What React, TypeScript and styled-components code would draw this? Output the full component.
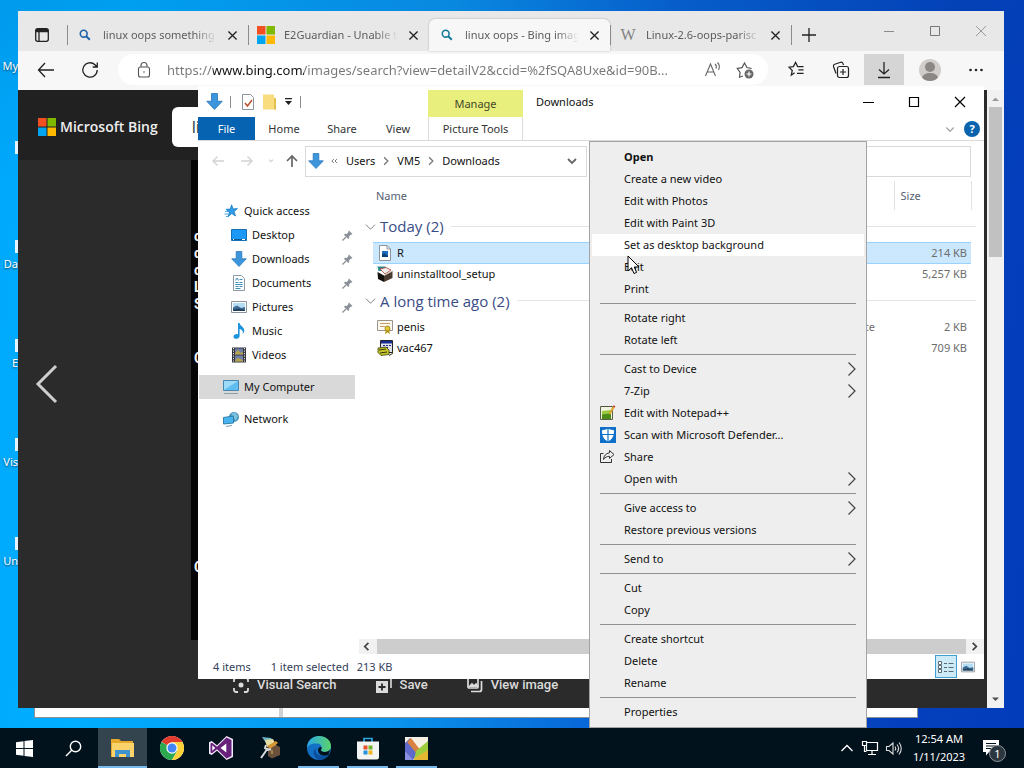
import { ReactNode } from "react";
import styled, { createGlobalStyle, css } from "styled-components";

const GlobalStyle = createGlobalStyle`
  *, *::before, *::after {
    box-sizing: border-box;
  }
  body {
    margin: 0;
    font-family: "Noto Sans", "Open Sans", sans-serif;
    font-size: 11px;
    line-height: 16px;
    color: #111;
    overflow: hidden;
  }
  button, input {
    font: inherit;
    color: inherit;
    border: none;
    padding: 0;
    background: none;
  }
  svg {
    display: block;
    flex-shrink: 0;
  }
`;

/* ---------- icons ---------- */

interface LineProps {
  d: string;
  size?: number;
  box?: number;
  color?: string;
  stroke?: number;
}

function Line({ d, size = 16, box = 16, color = "#222", stroke = 1 }: LineProps) {
  return (
    <svg
      width={size}
      height={size}
      viewBox={`0 0 ${box} ${box}`}
      fill="none"
      stroke={color}
      strokeWidth={stroke}
      aria-hidden="true"
    >
      <path d={d} />
    </svg>
  );
}

const CLOSE = "M3 3l10 10M13 3L3 13";
const CHEVRON_DOWN = "M3 6l5 5 5-5";
const CHEVRON_RIGHT = "M5 2l6 6-6 6";

function MicrosoftLogo({ size = 18 }: { size?: number }) {
  return (
    <svg width={size} height={size} viewBox="0 0 18 18" aria-hidden="true">
      <path fill="#f25022" d="M0 0h8.5v8.5H0z" />
      <path fill="#7fba00" d="M9.5 0H18v8.5H9.5z" />
      <path fill="#00a4ef" d="M0 9.5h8.5V18H0z" />
      <path fill="#ffb900" d="M9.5 9.5H18V18H9.5z" />
    </svg>
  );
}

function SearchIcon({ color }: { color: string }) {
  return (
    <svg width="18" height="18" viewBox="0 0 18 18" fill="none" stroke={color} strokeWidth="1.6" aria-hidden="true">
      <circle cx="7.7" cy="7.7" r="3.4" />
      <path d="M10.2 10.2l3.6 3.6" strokeWidth="2" />
    </svg>
  );
}

function DownArrow({ size = 16 }: { size?: number }) {
  return (
    <svg width={size} height={size} viewBox="0 0 16 16" aria-hidden="true">
      <path d="M5.2.5h5.6v7.3h4.5L8 15.5.7 7.8h4.5z" fill="#3d95dc" stroke="#2a78bd" strokeWidth="0.8" />
    </svg>
  );
}

function StarIcon() {
  return (
    <svg width="16" height="16" viewBox="0 0 16 16" aria-hidden="true">
      <path d="M8.6 1.8l1.5 4.1 4.4-.3-3.4 2.9 1.4 4.5-3.7-2.4-3.5 2.9 1-4.5L3 6.3l4.3-.2z" fill="#2d9be8" stroke="#1b7cc4" strokeWidth="0.8" />
      <path d="M2 8.5h3M1.500 11h3.600M3 13.500h2.600" stroke="#4aa8e8" />
    </svg>
  );
}

function DesktopIcon() {
  return (
    <svg width="16" height="16" viewBox="0 0 16 16" aria-hidden="true">
      <path d="M.5 2.5h15v11H.5z" fill="#1b98f5" stroke="#1672b8" />
      <path d="M1 12.5h14" stroke="#0c5a96" />
      <path d="M2 12.5h1m8 0h3" stroke="#fff" />
    </svg>
  );
}

function DocumentIcon() {
  return (
    <svg width="16" height="16" viewBox="0 0 16 16" fill="none" aria-hidden="true">
      <path d="M2.5.5h8l3 3v12h-11z" fill="#fff" stroke="#8a9aa5" />
      <path d="M4.500 5.500l1.500-2.500 1.500 2.500M8.500 4.500h3M4.500 7.500h3m1 0h3M4.500 9.500h7M4.500 11.500h3m1 0h3M4.500 13.500h5" stroke="#3b8fb8" />
    </svg>
  );
}

function PictureIcon({ size = 16 }: { size?: number }) {
  return (
    <svg width={size} height={size} viewBox="0 0 16 16" aria-hidden="true">
      <path d="M.5 2.500h15v11H.5z" fill="#fff" stroke="#8b939b" />
      <path d="M2 4h12v8H2z" fill="#b5dcf5" />
      <path d="M2 8.500l4-2 4 2.500 4-1V12H2z" fill="#3d6c94" />
      <path d="M2 10.500l6-1 6 1.500v1H2z" fill="#24435f" />
    </svg>
  );
}

function MusicIcon() {
  return (
    <svg width="16" height="16" viewBox="0 0 16 16" fill="#1d93dc" aria-hidden="true">
      <path d="M7 0h1.600c.3 3 4.900 4 4.700 7.500-.1 1.700-.8 2.700-1.600 3.400.8-3-.8-4.300-3.100-5v7c0 1.600-1.700 2.900-3.500 2.900-1.600 0-2.600-.9-2.600-2.100C2.500 12 4.200 11 5.800 11c.5 0 .9.1 1.200.2z" />
    </svg>
  );
}

function VideoIcon() {
  return (
    <svg width="16" height="16" viewBox="0 0 16 16" aria-hidden="true">
      <path d="M1 .5h14v15H1z" fill="#33363c" />
      <path d="M4 1.500h8v6H4zM4 8.500h8v6H4z" fill="#6f7fa8" />
      <path d="M4 6l3-3 3 3 2-1v2.500H4zM4 13l3-2 5 2v1.500H4z" fill="#b6a34e" />
      <path d="M2.500 1v14M13.500 1v14" stroke="#e6e8ea" strokeDasharray="1.200 1.300" />
    </svg>
  );
}

function ComputerIcon() {
  return (
    <svg width="16" height="16" viewBox="0 0 16 16" aria-hidden="true">
      <path d="M.5 1.500h15v10H.5z" fill="#5fbdf0" stroke="#4a86ae" />
      <path d="M1 2h14L1 11z" fill="#9ddaf8" />
      <path d="M1 14.500h14" stroke="#8ba0ad" />
    </svg>
  );
}

function NetworkIcon() {
  return (
    <svg width="16" height="16" viewBox="0 0 16 16" aria-hidden="true">
      <circle cx="11" cy="6" r="5" fill="#4690b8" />
      <path d="M8 3l4-2 3 4-2 5z" fill="#7cc1dd" />
      <path d="M.5 6.500l10-1.500v7l-10 1z" fill="#48b4ee" stroke="#337da8" />
      <path d="M3 15.500l6-1" stroke="#6fa0bd" />
    </svg>
  );
}

function PinIcon() {
  return (
    <svg width="11" height="11" viewBox="0 0 11 11" aria-hidden="true">
      <path d="M7 .5L10.500 4l-1 .7-.6-.2-1.800 2 .1 1.800-.9.8L1.900 4.700l.9-.9 1.800.1 2-1.800-.3-.7z" fill="#8b9299" />
      <path d="M4 7L.5 10.500" stroke="#8b9299" strokeWidth="1.300" />
    </svg>
  );
}

function ImageFileIcon() {
  return (
    <svg width="16" height="16" viewBox="0 0 16 16" aria-hidden="true">
      <path d="M2.500.5h7.500l3.500 3.500v11.500h-11z" fill="#fff" stroke="#8d959c" />
      <path d="M10 .5V4h3.500" fill="none" stroke="#8d959c" />
      <path d="M5 6h6v6H5z" fill="#1c6fc0" />
      <path d="M5 10l2-2 4 3v1H5z" fill="#0b3e74" />
    </svg>
  );
}

function BoxIcon() {
  return (
    <svg width="16" height="16" viewBox="0 0 16 16" aria-hidden="true">
      <path d="M.5.500h8l1 4.500H1.500z" fill="#2b8a8d" />
      <path d="M3 3l6-1.500 5 2.500-6 4z" fill="#eee" stroke="#b4402b" strokeWidth="0.800" />
      <path d="M.5 6l6.500 3.500v6.500l-6-3z" fill="#15110f" />
      <path d="M7 9.500l8.500-4.500v7l-8.500 4z" fill="#493b30" />
      <path d="M7 9.500l8.500-4.500" stroke="#c9c0b8" />
    </svg>
  );
}

function CertificateIcon() {
  return (
    <svg width="16" height="16" viewBox="0 0 16 16" aria-hidden="true">
      <path d="M.5 1.500h15v10H.5z" fill="#fdf9ef" stroke="#99938a" />
      <path d="M3 4.500h10M3 7.500h5" stroke="#c49d73" />
      <path d="M9 10l-1 5 2.500-1.500L13 15l-1-5z" fill="#b99c1a" />
      <circle cx="10.500" cy="9.500" r="2.500" fill="#e3c831" stroke="#917a10" strokeWidth="0.800" />
    </svg>
  );
}

function InstallerIcon() {
  return (
    <svg width="16" height="16" viewBox="0 0 16 16" aria-hidden="true">
      <path d="M3.500.5h12v12h-12z" fill="#dfe2ec" stroke="#22242c" />
      <path d="M4 1h11v2.500H4z" fill="#1a2c8c" />
      <path d="M6 5.500h2m1 0h2m1 0h2M6 7.500h2m1 0h2" stroke="#1a2c8c" />
      <path d="M1 8l8-1 3 3v4.500l-8 1-3-3z" fill="#c7c62c" stroke="#3f410b" strokeWidth="0.800" />
      <path d="M2 10l7-1M3 13l7-1M12 15.500l3.500-2V11" stroke="#33350a" fill="none" />
    </svg>
  );
}

function NotepadIcon() {
  return (
    <svg width="16" height="16" viewBox="0 0 16 16" aria-hidden="true">
      <path d="M.5 1.500h12v13H.5z" fill="#eef4dd" stroke="#5b6147" />
      <path d="M2 6l9-1v9H2z" fill="#9ac83e" />
      <path d="M2 9.500l9-1V14H2z" fill="#4b8b17" />
      <path d="M1 1.500h11" stroke="#444" strokeDasharray="1 1" />
      <path d="M14 1.500L9.500 9" stroke="#e0a32d" strokeWidth="2" />
      <path d="M13.300.8l1.800 1" stroke="#c33b2c" strokeWidth="1.500" />
    </svg>
  );
}

function DefenderIcon() {
  return (
    <svg width="16" height="16" viewBox="0 0 16 16" aria-hidden="true">
      <path d="M0 0h16v16H0z" fill="#0f70c9" />
      <path d="M8 1.500c2 1.300 4 1.700 6 1.700 0 5.300-1.200 9-6 11.300-4.800-2.300-6-6-6-11.300 2 0 4-.4 6-1.700z" fill="#fff" />
      <path d="M8 1v14M1.500 7.500h13" stroke="#0f70c9" strokeWidth="1.200" />
    </svg>
  );
}

function ShareIcon() {
  return (
    <svg width="16" height="16" viewBox="0 0 16 16" fill="none" stroke="#333" aria-hidden="true">
      <path d="M3.500 4.500h-3v9h11V10" />
      <path d="M9.500 1.500L14 5.500 9.500 9.500V7.300C7 7.300 5 8.200 3.500 10.500c.3-3.700 2.300-6.200 6-6.700z" />
    </svg>
  );
}

/* ---------- desktop ---------- */

const Screen = styled.div`
  height: 100vh;
  display: flex;
  flex-direction: column;
`;

const Desktop = styled.main`
  position: relative;
  flex: 1;
  min-height: 0;
  background: linear-gradient(180deg, rgba(0, 70, 150, 0.15), transparent 25%),
    linear-gradient(95deg, #00a8fb 0%, #00aeff 12%, #0a93ec 42%, #0862d4 62%, #0440bd 88%, #033cba 100%);
`;

const Shortcuts = styled.div`
  position: absolute;
  top: -25px;
  left: 0;
  width: 18px;
  overflow: hidden;
  color: #fff;
`;

const Shortcut = styled.div<{ $shard: boolean }>`
  height: 99px;
  display: flex;
  flex-direction: column;
  justify-content: flex-end;
  align-items: flex-end;
  gap: 3px;

  &::before {
    content: "";
    width: 3px;
    height: 13px;
    background: ${(p) => (p.$shard ? "#e4f3fd" : "transparent")};
  }

  span {
    min-height: 16px;
    text-shadow: 0 1px 2px rgba(0, 0, 0, 0.6);
  }
`;

const BackWindow = styled.div`
  position: absolute;
  left: 34px;
  right: 106px;
  bottom: 10px;
  height: 40px;
  display: flex;
  background: #fff;
  border: 1px solid #8a9298;

  &::before {
    content: "";
    width: 248px;
    border-right: 4px solid #d0d3d6;
  }
`;

/* ---------- browser ---------- */

const Browser = styled.section`
  position: absolute;
  inset: 11px 20px 20px 18px;
  display: flex;
  flex-direction: column;
  background: #2b2b2b;
`;

const TabStrip = styled.div`
  height: 40px;
  display: flex;
  align-items: stretch;
  background: #e8e8e8;
`;

const TabMenu = styled.button`
  width: 49px;
  padding-left: 16px;
  padding-top: 8px;
`;

const Tab = styled.div<{ $active?: boolean }>`
  position: relative;
  width: 181px;
  margin-top: 8px;
  padding: 0 9px;
  display: flex;
  align-items: center;
  gap: 9px;
  color: #5c5c5c;
  border-radius: 6px 6px 0 0;
  ${(p) =>
    p.$active &&
    css`
      background: #f7f7f7;
      box-shadow: 0 0 2px rgba(0, 0, 0, 0.3);
    `}

  &::before {
    content: "";
    position: absolute;
    left: 0;
    height: 20px;
    border-left: 1px solid ${(p) => (p.$active ? "transparent" : "#8b8b8b")};
  }

  ${(p) => p.$active && "& + &::before { border-color: transparent; }"}
`;

const TabTitle = styled.span`
  flex: 1;
  min-width: 0;
  overflow: hidden;
  white-space: nowrap;
  mask-image: linear-gradient(90deg, #000 80%, transparent);
`;

const Wiki = styled.span`
  width: 18px;
  text-align: center;
  font-family: "Liberation Serif", serif;
  font-size: 16px;
  color: #808080;
`;

const NewTab = styled.button`
  position: relative;
  width: 36px;
  margin-top: 8px;
  padding-left: 10px;

  &::before {
    content: "";
    position: absolute;
    left: 0;
    top: 6px;
    height: 20px;
    border-left: 1px solid #8b8b8b;
  }
`;

const WindowButtons = styled.div`
  margin-left: auto;
  display: flex;
  align-items: center;
  gap: 30px;
  padding-right: 15px;

  button {
    width: 16px;
    height: 16px;
  }
`;

const Toolbar = styled.div`
  height: 39px;
  display: flex;
  align-items: center;
  background: #f7f7f7;
  padding: 0 20px 2px 19px;
`;

const ToolButton = styled.button<{ $w: number; $on?: boolean }>`
  width: ${(p) => p.$w}px;
  height: 31px;
  display: flex;
  align-items: center;
  justify-content: ${(p) => (p.$on ? "center" : "flex-start")};
  background: ${(p) => (p.$on ? "#d5d5d5" : "none")};
`;

const ProfileButton = styled(ToolButton)`
  padding-left: 15px;
`;

const AddressBar = styled.div`
  flex: 1;
  min-width: 0;
  height: 31px;
  display: flex;
  align-items: center;
  gap: 14px;
  margin-right: 20px;
  padding: 0 14px 0 17px;
  border-radius: 16px;
  background: #fff;
`;

const AddressInput = styled.input`
  flex: 1;
  min-width: 0;
  font-size: 13px;
  color: transparent;
  background: linear-gradient(90deg, #777 0 46px, #111 46px 137px, #777 137px);
  -webkit-background-clip: text;
  background-clip: text;
`;

const Avatar = styled.span`
  width: 22px;
  height: 22px;
  border-radius: 50%;
  overflow: hidden;
`;

const PageArea = styled.div`
  flex: 1;
  min-height: 0;
  display: flex;
`;

const Page = styled.div`
  flex: 1;
  min-width: 0;
  display: flex;
  flex-direction: column;
`;

const BingHeader = styled.header`
  height: 70px;
  display: flex;
  align-items: center;
  gap: 14px;
  padding: 4px 0 0 20px;
  background: #212121;
`;

const BingLogo = styled.a`
  display: flex;
  align-items: center;
  gap: 4px;
  color: #eee;
  font: 600 14px/20px "Open Sans", sans-serif;
  text-decoration: none;
`;

const BingSearch = styled.input`
  flex: 1;
  height: 40px;
  padding-left: 20px;
  border-radius: 6px;
  background: #fff;
  color: #2a4a4a;
  font-size: 16px;
`;

const Viewer = styled.div`
  flex: 1;
  min-height: 0;
  display: flex;
`;

const PrevButton = styled.button`
  width: 173px;
  padding: 0 0 32px 7px;
`;

const Photo = styled.div`
  flex: 1;
  padding: 68px 0 0 3px;
  background: #050505;
  color: #f2f2f2;
  font: bold 14px/17px Roboto, sans-serif;
`;

const PhotoLine = styled.div<{ $gap?: number }>`
  margin-top: ${(p) => p.$gap || 0}px;
`;

const ViewerActions = styled.footer`
  height: 68px;
  display: flex;
  gap: 39px;
  padding: 35px 0 0 215px;

  button {
    display: flex;
    gap: 8px;
    height: 20px;
    align-items: center;
    color: #dcdcdc;
    font: 500 13px/20px Roboto, sans-serif;
  }
`;

const PageScroll = styled.div`
  width: 17px;
  margin-left: 3px;
  display: flex;
  flex-direction: column;
  align-items: center;
  background: #f1f1f1;

  div {
    width: 13px;
    height: 150px;
    margin: 0 2px auto;
    background: #c1c1c1;
  }
`;

/* ---------- file explorer ---------- */

const Explorer = styled.section`
  position: absolute;
  inset: 86px 40px 49px 198px;
  display: flex;
  flex-direction: column;
  background: #fff;
`;

const TitleRow = styled.div`
  height: 31px;
  display: flex;
  align-items: center;
`;

const ExplorerButtons = styled(WindowButtons)`
  padding-right: 16px;
`;

const QuickTools = styled.div`
  width: 230px;
  padding-left: 8px;
  display: flex;
  align-items: center;
  gap: 7px;
`;

const Divider = styled.span`
  height: 12px;
  border-left: 1px solid #8c8c8c;

  & + svg {
    margin-left: 3px;
  }
`;

const ManageTab = styled.div`
  width: 95px;
  align-self: stretch;
  margin: 4px 13px 0 0;
  background: #e9ef7d;
  color: #44482a;
  line-height: 28px;
  text-align: center;
`;

const Ribbon = styled.div`
  height: 24px;
  display: flex;
  align-items: stretch;
  padding-right: 4px;
  border-bottom: 1px solid #d9dadb;
`;

const RibbonTabs = styled.div`
  width: 230px;
  display: flex;
`;

const RibbonTab = styled.button<{ $w: number; $file?: boolean; $tools?: boolean }>`
  width: ${(p) => p.$w}px;
  background: ${(p) => (p.$file ? "#0563b1" : "none")};
  color: ${(p) => (p.$file ? "#fff" : "#333")};
  border: solid #dcdcdc;
  border-width: ${(p) => (p.$tools ? "0 1px" : "0")};
`;

const ExpandRibbon = styled.button`
  margin-left: auto;
`;

const Help = styled.button`
  width: 16px;
  height: 16px;
  margin-left: 8px;
  align-self: center;
  border-radius: 50%;
  background: #0a64ad;
  color: #fff;
  font-weight: bold;
  line-height: 16px;
`;

const NavRow = styled.div`
  height: 40px;
  display: flex;
  align-items: center;
  padding: 0 13px 0 12px;
`;

const NavButton = styled.button<{ $w: number }>`
  width: ${(p) => p.$w}px;
`;

const PathBox = styled.div`
  width: 282px;
  height: 31px;
  display: flex;
  align-items: center;
  gap: 6px;
  padding: 0 6px 0 2px;
  border: 1px solid #d9d9d9;

  button:last-child {
    margin-left: auto;
  }
`;

const SearchBox = styled.input`
  flex: 1;
  min-width: 0;
  height: 31px;
  margin-left: 6px;
  border: 1px solid #d9d9d9;
`;

const Content = styled.div`
  flex: 1;
  min-height: 0;
  display: flex;
`;

const Sidebar = styled.nav`
  width: 161px;
  padding: 18px 4px 0 1px;
`;

const SideItem = styled.button<{ $level?: number; $gap?: boolean; $on?: boolean }>`
  width: 100%;
  height: 24px;
  margin-top: ${(p) => (p.$gap ? 8 : 0)}px;
  padding: 0 2px 0 ${(p) => (p.$level ? 32 : 24)}px;
  display: flex;
  align-items: center;
  gap: 5px;
  background: ${(p) => (p.$on ? "#d9d9d9" : "none")};

  span + svg {
    margin-left: auto;
  }
`;

const ListPane = styled.div`
  flex: 1;
  min-width: 0;
  display: flex;
  flex-direction: column;
`;

const FileTable = styled.table`
  width: calc(100% - 14px);
  margin: 0 8px auto 6px;
  table-layout: fixed;
  border-collapse: collapse;

  th, td {
    padding: 0;
    font-weight: normal;
    text-align: left;
  }
  thead tr {
    height: 29px;
    color: #55606f;
  }
  thead th:nth-child(n + 4) {
    border-left: 1px solid #e3e3e3;
  }
  thead th:nth-child(2) {
    padding-left: 3px;
  }
  thead th:nth-child(4) {
    padding-left: 6px;
  }
`;

const Col = styled.col<{ $w?: number }>`
  width: ${(p) => (p.$w ? `${p.$w}px` : "auto")};
`;

const GroupLabel = styled.div`
  height: 32px;
  display: flex;
  align-items: center;
  gap: 4px;
  color: #3a4c86;
  font: 15px/20px "Open Sans", sans-serif;

  &::after {
    content: "";
    flex: 1;
    margin-left: 3px;
    border-top: 1px solid #e2e4e8;
  }
`;

const FileRow = styled.tr<{ $selected?: boolean }>`
  height: 21px;
  color: #6d6d6d;

  td:nth-child(n + 2):nth-child(-n + 4) {
    background: ${(p) => (p.$selected ? "#cce8ff" : "none")};
    border: solid #99d1ff;
    border-width: ${(p) => (p.$selected ? "1px 0" : "0")};
  }
  td:nth-child(3) {
    padding-left: 9px;
  }
  td:nth-child(4) {
    padding-right: 4px;
    text-align: right;
  }
`;

const FileName = styled.div`
  display: flex;
  align-items: center;
  gap: 4px;
  padding-left: 4px;
  color: #111;
`;

const HScroll = styled.div`
  height: 15px;
  display: flex;
  align-items: center;
  background: #f1f1f1;

  button {
    width: 18px;
    padding-left: 3px;
  }
  div {
    flex: 1;
    height: 15px;
    background: #cdcdcd;
  }
`;

const StatusBar = styled.div`
  height: 25px;
  display: flex;
  align-items: center;
  padding: 0 5px 0 15px;
  color: #35405a;

  span {
    margin-right: 20px;
  }
  span + span {
    margin-right: 8px;
  }
`;

const ViewButtons = styled.div`
  margin-left: auto;
  display: flex;
`;

const ViewButton = styled.button<{ $on?: boolean }>`
  width: 22px;
  height: 23px;
  display: grid;
  place-items: center;
  background: ${(p) => (p.$on ? "#cdeaf7" : "none")};
  border: 1px solid ${(p) => (p.$on ? "#3d9ecf" : "transparent")};
`;

/* ---------- context menu ---------- */

const Menu = styled.div`
  position: absolute;
  top: 141px;
  left: 589px;
  width: 278px;
  padding: 4px 2px;
  background: #eeeeee;
  border: 1px solid #a3a3a3;
`;

const MenuItem = styled.button<{ $bold?: boolean; $hover?: boolean }>`
  width: 100%;
  height: 22px;
  display: flex;
  align-items: center;
  padding: 0 4px 0 8px;
  font-weight: ${(p) => (p.$bold ? "bold" : "normal")};
  background: ${(p) => (p.$hover ? "#fff" : "none")};

  span + svg {
    margin-left: auto;
  }
`;

const MenuIcon = styled.i`
  width: 24px;
`;

const MenuLine = styled.hr`
  height: 1px;
  margin: 3px 8px;
  border: none;
  background: #919191;
`;

const Pointer = styled.svg`
  position: absolute;
  left: 627px;
  top: 255px;
`;

/* ---------- taskbar ---------- */

const Taskbar = styled.footer`
  height: 40px;
  display: flex;
  background: #02121d;
  color: #fff;
`;

const TaskButton = styled.button<{ $on?: boolean; $running?: boolean }>`
  position: relative;
  width: 49px;
  display: grid;
  place-items: center;
  background: ${(p) => (p.$on ? "#33444f" : "none")};

  &::after {
    content: "";
    position: absolute;
    bottom: 0;
    left: ${(p) => (p.$on ? 0 : 4)}px;
    right: ${(p) => (p.$on ? 0 : 4)}px;
    height: 2px;
    background: ${(p) => (p.$on || p.$running ? "#76b9ed" : "transparent")};
  }
`;

const Tray = styled.div`
  margin-left: auto;
  display: flex;
  align-items: center;
  gap: 6px;
  padding-right: 22px;
`;

const Clock = styled.time`
  width: 62px;
  margin-right: 6px;
  text-align: center;
  line-height: 18px;
`;

const Notices = styled.button`
  position: relative;
  width: 20px;
  height: 20px;

  span {
    position: absolute;
    left: 7px;
    top: 7px;
    width: 17px;
    height: 17px;
    border-radius: 50%;
    border: 1px solid #8b949b;
    background: #2b363e;
    color: #fff;
    line-height: 15px;
  }
`;

/* ---------- data ---------- */

const shortcuts = ["My", "", "Da", "E", "Vis", "Un"];

const sideItems: { label: string; icon: ReactNode; level?: number; pin?: boolean; gap?: boolean; on?: boolean }[] = [
  { label: "Quick access", icon: <StarIcon /> },
  { label: "Desktop", icon: <DesktopIcon />, level: 1, pin: true },
  { label: "Downloads", icon: <DownArrow />, level: 1, pin: true },
  { label: "Documents", icon: <DocumentIcon />, level: 1, pin: true },
  { label: "Pictures", icon: <PictureIcon />, level: 1, pin: true },
  { label: "Music", icon: <MusicIcon />, level: 1 },
  { label: "Videos", icon: <VideoIcon />, level: 1 },
  { label: "My Computer", icon: <ComputerIcon />, gap: true, on: true },
  { label: "Network", icon: <NetworkIcon />, gap: true },
];

const groups = [
  {
    label: "Today (2)",
    files: [
      { name: "R", icon: <ImageFileIcon />, type: "", size: "214 KB", selected: true },
      { name: "uninstalltool_setup", icon: <BoxIcon />, type: "", size: "5,257 KB" },
    ],
  },
  {
    label: "A long time ago (2)",
    files: [
      { name: "penis", icon: <CertificateIcon />, type: "Security Certificate", size: "2 KB" },
      { name: "vac467", icon: <InstallerIcon />, type: "", size: "709 KB" },
    ],
  },
];

interface Entry {
  label: string;
  icon?: ReactNode;
  sub?: boolean;
  bold?: boolean;
  hover?: boolean;
}

const menu: Entry[][] = [
  [
    { label: "Open", bold: true },
    { label: "Create a new video" },
    { label: "Edit with Photos" },
    { label: "Edit with Paint 3D" },
    { label: "Set as desktop background", hover: true },
    { label: "Edit" },
    { label: "Print" },
  ],
  [{ label: "Rotate right" }, { label: "Rotate left" }],
  [
    { label: "Cast to Device", sub: true },
    { label: "7-Zip", sub: true },
    { label: "Edit with Notepad++", icon: <NotepadIcon /> },
    { label: "Scan with Microsoft Defender...", icon: <DefenderIcon /> },
    { label: "Share", icon: <ShareIcon /> },
    { label: "Open with", sub: true },
  ],
  [{ label: "Give access to", sub: true }, { label: "Restore previous versions" }],
  [{ label: "Send to", sub: true }],
  [{ label: "Cut" }, { label: "Copy" }],
  [{ label: "Create shortcut" }, { label: "Delete" }, { label: "Rename" }],
  [{ label: "Properties" }],
];

/* ---------- parts ---------- */

function BrowserTab({ icon, title, active }: { icon: ReactNode; title: string; active?: boolean }) {
  return (
    <Tab $active={active}>
      {icon}
      <TabTitle>{title}</TabTitle>
      <button aria-label={`Close ${title}`}>
        <Line d={CLOSE} size={13} stroke={1.6} />
      </button>
    </Tab>
  );
}

function BrowserWindow() {
  return (
    <Browser aria-label="Browser">
      <TabStrip>
        <TabMenu aria-label="Tab actions">
          <svg width="16" height="16" viewBox="0 0 16 16" fill="none" stroke="#222" strokeWidth="1.300">
            <rect x="1.700" y="1.700" width="12.600" height="12.600" rx="2" />
            <path d="M1.700 4.500h12.600M5 4.500v9.800" />
            <path d="M2 3h12" strokeWidth="2" />
          </svg>
        </TabMenu>
        <BrowserTab icon={<SearchIcon color="#1f63a8" />} title="linux oops something" />
        <BrowserTab icon={<MicrosoftLogo />} title="E2Guardian - Unable to" />
        <BrowserTab icon={<SearchIcon color="#167a9c" />} title="linux oops - Bing images" active />
        <BrowserTab icon={<Wiki>W</Wiki>} title="Linux-2.6-oops-parisc" />
        <NewTab aria-label="New tab">
          <Line d="M8 1v14M1 8h14" stroke={1.3} />
        </NewTab>
        <WindowButtons>
          <button aria-label="Minimize browser"><Line d="M3 8.500h10" color="#8a8a8a" /></button>
          <button aria-label="Maximize browser"><Line d="M3.500 3.500h9v9h-9z" color="#777" /></button>
          <button aria-label="Close browser"><Line d={CLOSE} color="#999" /></button>
        </WindowButtons>
      </TabStrip>
      <Toolbar>
        <ToolButton $w={44} aria-label="Back">
          <Line d="M17 9H1.500M8 2L1.500 9 8 16" size={18} box={18} stroke={1.3} />
        </ToolButton>
        <ToolButton $w={37} aria-label="Refresh">
          <Line d="M16.200 9A7.200 7.200 0 1 1 14 3.800L16 6M16.300 1.500V6h-4.600" size={18} box={18} stroke={1.3} />
        </ToolButton>
        <AddressBar>
          <svg width="18" height="18" viewBox="0 0 18 18" fill="none" stroke="#555" strokeWidth="1.100">
            <rect x="3.500" y="6" width="11" height="10" rx="2" />
            <path d="M6 6V4.500a3 3 0 0 1 6 0V6" />
            <circle cx="9" cy="11" r="0.800" fill="#555" stroke="none" />
          </svg>
          <AddressInput
            aria-label="Address"
            defaultValue="https://www.bing.com/images/search?view=detailV2&ccid=%2fSQA8Uxe&id=90B..."
          />
          <button aria-label="Read aloud">
            <Line d="M1.500 15L6.500 3l5 12M3 11h7M11 3c1.300 1 1.600 3 1 4.500M13.500 1.500c2 2 2.200 5 1 7.500" size={18} box={18} color="#666" stroke={1.1} />
          </button>
          <button aria-label="Add to favorites">
            <svg width="18" height="18" viewBox="0 0 18 18" fill="none" stroke="#555" strokeWidth="1.200">
              <path d="M7 15l-3.500 1.200.6-4.800L1.300 7.500l4.700-.9L8.500 2l2.400 4.500 4.800 1" />
              <circle cx="13" cy="13" r="4.500" fill="#666" stroke="none" />
              <path d="M13 10.500v5M10.500 13h5" stroke="#fff" />
            </svg>
          </button>
        </AddressBar>
        <ToolButton $w={44} aria-label="Favorites">
          <Line d="M7 12.500L3.500 15l1-5L1 6.500l4.700-.6L8 1.500l2.200 4.400h6.300M11 9.500h5.500M9.500 13H16.500" size={17} box={18} stroke={1.3} />
        </ToolButton>
        <ToolButton $w={32} aria-label="Collections">
          <svg width="18" height="18" viewBox="0 0 18 18" fill="none" stroke="#222" strokeWidth="1.200">
            <path d="M4 12.500L1.500 5.500a1.800 1.800 0 0 1 1.200-2.200l6-2a1.800 1.800 0 0 1 2.200 1.100L11.500 4" />
            <rect x="5.500" y="5.500" width="11" height="11" rx="2" />
            <path d="M11 8v6M8 11h6" />
          </svg>
        </ToolButton>
        <ToolButton $w={40} $on aria-label="Downloads">
          <Line d="M9 1v12M4 8.500L9 13l5-4.500M3 16.500h12" size={18} box={18} stroke={1.3} />
        </ToolButton>
        <ProfileButton $w={64} aria-label="Profile">
          <Avatar>
            <svg width="22" height="22" viewBox="0 0 22 22">
              <path d="M0 0h22v22H0z" fill="#d0cdca" />
              <circle cx="11" cy="8" r="5" fill="#8a8785" />
              <ellipse cx="11" cy="19" rx="8" ry="5" fill="#8a8785" />
            </svg>
          </Avatar>
        </ProfileButton>
        <ToolButton $w={16} aria-label="Settings and more">
          <svg width="16" height="16" viewBox="0 0 16 16" fill="#222">
            <circle cx="2.500" cy="8" r="1.300" />
            <circle cx="8" cy="8" r="1.300" />
            <circle cx="13.500" cy="8" r="1.300" />
          </svg>
        </ToolButton>
      </Toolbar>
      <PageArea>
        <Page>
          <BingHeader>
            <BingLogo href="#bing">
              <MicrosoftLogo />
              Microsoft Bing
            </BingLogo>
            <BingSearch aria-label="Search the web" defaultValue="linux oops" />
          </BingHeader>
          <Viewer>
            <PrevButton aria-label="Previous image">
              <Line d="M31 2L13 20l18 18" size={40} box={40} color="#cfcfcf" stroke={3} />
            </PrevButton>
            <Photo>
              <PhotoLine>o</PhotoLine>
              <PhotoLine>c</PhotoLine>
              <PhotoLine>c</PhotoLine>
              <PhotoLine>L</PhotoLine>
              <PhotoLine>S</PhotoLine>
              <PhotoLine $gap={37}>C</PhotoLine>
              <PhotoLine $gap={192}>C</PhotoLine>
            </Photo>
          </Viewer>
          <ViewerActions>
            <button>
              <svg width="16" height="16" viewBox="0 0 16 16" fill="none" stroke="#dcdcdc" strokeWidth="1.800">
                <path d="M1 5V3a2 2 0 0 1 2-2h2M11 1h2a2 2 0 0 1 2 2v2M15 11v2a2 2 0 0 1-2 2h-2M5 15H3a2 2 0 0 1-2-2v-2" />
                <circle cx="8" cy="8" r="2.500" fill="#dcdcdc" stroke="none" />
              </svg>
              Visual Search
            </button>
            <button>
              <svg width="16" height="16" viewBox="0 0 16 16">
                <path d="M0 4h12v12H0z" fill="#dcdcdc" />
                <path d="M6 6.500v7M2.500 10h7" stroke="#2b2b2b" strokeWidth="1.800" />
                <path d="M3 1h12v10" fill="none" stroke="#dcdcdc" strokeWidth="1.600" />
              </svg>
              Save
            </button>
            <button>
              <svg width="16" height="16" viewBox="0 0 16 16" fill="none" stroke="#dcdcdc" strokeWidth="1.700">
                <rect x="1" y="1" width="10" height="10" rx="1" />
                <path d="M2 10l3-3 2 2 2-2 2 3" fill="#dcdcdc" />
                <path d="M14.500 4v8.500a2 2 0 0 1-2 2H4" />
              </svg>
              View image
            </button>
          </ViewerActions>
        </Page>
        <PageScroll>
          <svg width="17" height="17" viewBox="0 0 17 17"><path d="M5 11h7L8.500 7.500z" fill="#9a9a9a" /></svg>
          <div />
          <svg width="17" height="17" viewBox="0 0 17 17"><path d="M5 6.500h7L8.500 10z" fill="#505050" /></svg>
        </PageScroll>
      </PageArea>
    </Browser>
  );
}

function ExplorerWindow() {
  return (
    <Explorer aria-label="Downloads">
      <TitleRow>
        <QuickTools>
          <DownArrow size={17} />
          <Divider />
          <svg width="14" height="16" viewBox="0 0 14 16" fill="none">
            <path d="M1.500.5h8l3 3v12h-11z" fill="#fff" stroke="#8d959c" />
            <path d="M4 9l2.500 3L11 6" stroke="#b8512b" strokeWidth="1.500" />
          </svg>
          <svg width="15" height="16" viewBox="0 0 15 16">
            <path d="M1 .5h11v3l2 1v11H1z" fill="#f9dc7e" />
            <path d="M12 3.500v12h2V5z" fill="#e3bf52" />
          </svg>
          <svg width="9" height="8" viewBox="0 0 9 8">
            <path d="M1 0h7v1.200H1zM1 3h7L4.500 7z" fill="#222" />
          </svg>
          <Divider />
        </QuickTools>
        <ManageTab>Manage</ManageTab>
        Downloads
        <ExplorerButtons>
          <button aria-label="Minimize"><Line d="M3 8.500h11" color="#000" /></button>
          <button aria-label="Maximize"><Line d="M3.500 3.500h9v9h-9z" color="#000" stroke={1.2} /></button>
          <button aria-label="Close"><Line d={CLOSE} color="#000" stroke={1.2} /></button>
        </ExplorerButtons>
      </TitleRow>
      <Ribbon>
        <RibbonTabs>
          <RibbonTab $w={57} $file>File</RibbonTab>
          <RibbonTab $w={58}>Home</RibbonTab>
          <RibbonTab $w={58}>Share</RibbonTab>
          <RibbonTab $w={54}>View</RibbonTab>
        </RibbonTabs>
        <RibbonTab $w={95} $tools>Picture Tools</RibbonTab>
        <ExpandRibbon aria-label="Expand the ribbon">
          <Line d={CHEVRON_DOWN} size={12} color="#a8a8a8" stroke={1.8} />
        </ExpandRibbon>
        <Help aria-label="Help">?</Help>
      </Ribbon>
      <NavRow>
        <NavButton $w={29} aria-label="Back">
          <Line d="M14 8H3M7.500 3.500L3 8l4.500 4.500" color="#d2d2d2" stroke={1.4} />
        </NavButton>
        <NavButton $w={28} aria-label="Forward">
          <Line d="M2 8h11M8.500 3.500L13 8l-4.500 4.500" color="#d2d2d2" stroke={1.4} />
        </NavButton>
        <NavButton $w={17} aria-label="Recent locations">
          <Line d="M3 4l3 3 3-3" color="#d0d0d0" size={8} box={12} stroke={1.6} />
        </NavButton>
        <NavButton $w={21} aria-label="Up">
          <Line d="M8 14V3M3 8l5-5 5 5" color="#666" stroke={1.7} />
        </NavButton>
        <PathBox>
          <DownArrow />
          <Line d="M6 5L3 8l3 3M11 5L8 8l3 3" size={10} color="#555" stroke={1.3} />
          <button>Users</button>
          <Line d={CHEVRON_RIGHT} size={10} color="#777" stroke={2} />
          <button>VM5</button>
          <Line d={CHEVRON_RIGHT} size={10} color="#777" stroke={2} />
          <button>Downloads</button>
          <button aria-label="Previous locations">
            <Line d="M4 6l4 4 4-4" color="#666" stroke={1.8} />
          </button>
        </PathBox>
        <SearchBox aria-label="Search Downloads" />
      </NavRow>
      <Content>
        <Sidebar>
          {sideItems.map((item) => (
            <SideItem key={item.label} $level={item.level} $gap={item.gap} $on={item.on}>
              {item.icon}
              <span>{item.label}</span>
              {item.pin ? <PinIcon /> : null}
            </SideItem>
          ))}
        </Sidebar>
        <ListPane>
          <FileTable>
            <colgroup>
              <Col $w={8} />
              <Col />
              <Col $w={125} />
              <Col $w={77} />
              <Col $w={5} />
            </colgroup>
            <thead>
              <tr>
                <th />
                <th>Name</th>
                <th />
                <th>Size</th>
                <th />
              </tr>
            </thead>
            {groups.map((group) => (
              <tbody key={group.label}>
                <tr>
                  <th colSpan={5}>
                    <GroupLabel>
                      <Line d="M1 4l5 5 5-5" size={11} box={12} color="#777" />
                      {group.label}
                    </GroupLabel>
                  </th>
                </tr>
                {group.files.map((file) => (
                  <FileRow key={file.name} $selected={file.selected}>
                    <td />
                    <td>
                      <FileName>
                        {file.icon}
                        {file.name}
                      </FileName>
                    </td>
                    <td>{file.type}</td>
                    <td>{file.size}</td>
                    <td />
                  </FileRow>
                ))}
              </tbody>
            ))}
          </FileTable>
          <HScroll>
            <button aria-label="Scroll left"><Line d="M7 2L3 6l4 4" size={11} box={12} color="#444" stroke={1.9} /></button>
            <div />
            <button aria-label="Scroll right"><Line d="M4 2l4 4-4 4" size={11} box={12} color="#444" stroke={1.9} /></button>
          </HScroll>
        </ListPane>
      </Content>
      <StatusBar>
        <span>4 items</span>
        <span>1 item selected</span>
        <span>213 KB</span>
        <ViewButtons>
          <ViewButton $on aria-label="Details view">
            <svg width="18" height="14" viewBox="0 0 18 14" fill="none" stroke="#5b6b75">
              <path d="M1.500 1.500h3v3h-3zM1.500 5.500h3v3h-3zM1.500 9.500h3v3h-3z" fill="#fff" />
              <path d="M7 3.500h3m1.500 0h5M7 7.500h3m1.500 0h5M7 11.500h3m1.500 0h5" />
            </svg>
          </ViewButton>
          <ViewButton aria-label="Thumbnail view">
            <PictureIcon size={14} />
          </ViewButton>
        </ViewButtons>
      </StatusBar>
    </Explorer>
  );
}

function ContextMenu() {
  return (
    <Menu>
      {menu.map((section, index) => (
        <div key={section[0].label}>
          {index > 0 ? <MenuLine /> : null}
          {section.map((entry) => (
            <MenuItem key={entry.label} $bold={entry.bold} $hover={entry.hover}>
              <MenuIcon>{entry.icon}</MenuIcon>
              <span>{entry.label}</span>
              {entry.sub ? <Line d="M4.500 1.500L11 8l-6.500 6.500" color="#444" stroke={1.2} /> : null}
            </MenuItem>
          ))}
        </div>
      ))}
    </Menu>
  );
}

function TaskbarIcons() {
  return (
    <>
      <TaskButton aria-label="Start">
        <svg width="17" height="17" viewBox="0 0 17 17" fill="#fff">
          <path d="M0 2.300L7.500 1.200V8H0zM8.500 1L17 0v8H8.500zM0 9h7.500v6.800L0 14.700zM8.500 9H17v8l-8.500-1z" />
        </svg>
      </TaskButton>
      <TaskButton aria-label="Search">
        <svg width="17" height="17" viewBox="0 0 17 17" fill="none" stroke="#fff" strokeWidth="1.400">
          <circle cx="10.500" cy="6.500" r="5.200" />
          <path d="M6.700 10.300L1 16" />
        </svg>
      </TaskButton>
      <TaskButton $on aria-label="File Explorer">
        <svg width="23" height="20" viewBox="0 0 23 20">
          <path d="M0 1h8l2 2h12v16H0z" fill="#e6a92c" />
          <path d="M1 5h22v14H1z" fill="#fcd36a" />
          <path d="M4 19v-7h15v7h-4v-3H8v3z" fill="#3f94cf" />
        </svg>
      </TaskButton>
      <TaskButton aria-label="Chrome">
        <svg width="24" height="24" viewBox="0 0 24 24">
          <circle cx="12" cy="12" r="12" fill="#fff" />
          <path d="M12 12L1.600 6A12 12 0 0 1 22.400 6z" fill="#e33b2e" />
          <path d="M12 12L1.600 6A12 12 0 0 0 12 24l5.200-9z" fill="#2da94f" />
          <path d="M12 12l5.200 3L12 24A12 12 0 0 0 22.400 6H12z" fill="#fdd23b" />
          <circle cx="12" cy="12" r="5.700" fill="#fff" />
          <circle cx="12" cy="12" r="4.500" fill="#4285f4" />
        </svg>
      </TaskButton>
      <TaskButton aria-label="Visual Studio">
        <svg width="24" height="24" viewBox="0 0 24 24">
          <path d="M17.500 0L24 3v18l-6.500 3L8 14.800 2.700 19 0 17.700V6.300L2.700 5 8 9.200z" fill="#f2eaf8" />
          <path d="M17.500 1.500l5 2.400v16.200l-5 2.400L8 13.200 3 17.200l-1.500-.8V7.600L3 6.800l5 4z" fill="#68217a" />
          <path d="M17.300 7.500v9L11.500 12zM3.300 9.200v5.600L6.200 12z" fill="#fff" />
        </svg>
      </TaskButton>
      <TaskButton aria-label="Uninstall Tool">
        <svg width="22" height="24" viewBox="0 0 22 24">
          <path d="M3 1l9 1 6 10-9-2z" fill="#6fb4c8" />
          <path d="M6 4l8-1 4 8H8z" fill="#e6dfa1" />
          <path d="M9 12l8-3 4 2v8l-8 3.500-4-2.500z" fill="#6b513c" />
          <path d="M8 10l9-5 2 2-8 6z" fill="#d59532" />
          <path d="M2 22L9 12M7 9l-1 3 3 2 3-1" stroke="#d9dcdf" strokeWidth="2" fill="none" />
          <path d="M13 14v4" stroke="#d8b75a" />
        </svg>
      </TaskButton>
      <TaskButton $running aria-label="Edge">
        <svg width="24" height="24" viewBox="0 0 24 24">
          <defs>
            <linearGradient id="edgeTop" x1="0" x2="1">
              <stop offset="0" stopColor="#2aa7e8" />
              <stop offset="1" stopColor="#5bd36a" />
            </linearGradient>
          </defs>
          <circle cx="12" cy="12" r="12" fill="#1271c4" />
          <path d="M0 12C0 5 5 0 12 0s12 4.500 12 10c0 4-3 6-6.500 6-2.500 0-4-1-3.500-2.200 1.500-1.500 1-5.800-3.500-6.300C5 7 1 9 0 12z" fill="url(#edgeTop)" />
          <path d="M8.500 12c-1 5.500 3.500 9.500 12.500 7-2 3.200-5.500 5-9 5C6.500 22 5 15.500 8.500 12z" fill="#0c4f9c" />
          <path d="M14 13.800c-.5 1.200 1 2.200 3.500 2.200 2.500 0 4.500-1 5.700-2.700L21.500 19c-6 1.700-10.500-.5-10.500-5 0-2 1.500-3.500 3-3 .8.700.7 2 0 2.800z" fill="#02121d" />
        </svg>
      </TaskButton>
      <TaskButton $running aria-label="Microsoft Store">
        <svg width="24" height="24" viewBox="0 0 24 24">
          <path d="M8 6V2.500h8V6" fill="none" stroke="#2ba5e0" strokeWidth="1.700" />
          <path d="M1 5.500h22V21a2.500 2.500 0 0 1-2.500 2.500h-17A2.500 2.500 0 0 1 1 21z" fill="#f4f4f4" />
          <path d="M7.500 9.500h4v4h-4z" fill="#e8502c" />
          <path d="M12.500 9.500h4v4h-4z" fill="#72b52a" />
          <path d="M7.500 14.500h4v4h-4z" fill="#2290dd" />
          <path d="M12.500 14.500h4v4h-4z" fill="#efb421" />
        </svg>
      </TaskButton>
      <TaskButton $running aria-label="Media app">
        <svg width="23" height="23" viewBox="0 0 23 23">
          <path d="M0 0h23v23H0z" fill="#f6efe3" />
          <path d="M0 6L5 1l9 13-6 9H0z" fill="#5f69c9" />
          <path d="M2 5l4-4 10 13-3 4z" fill="#d9823f" />
          <path d="M11 14L23 4v19H9z" fill="#9dcd3c" />
          <path d="M10 21l13-8v10H9z" fill="#e4b733" />
          <path d="M0 14l8 9H0z" fill="#8d8fe0" />
        </svg>
      </TaskButton>
    </>
  );
}

export default function App() {
  return (
    <Screen>
      <GlobalStyle />
      <Desktop>
        <Shortcuts>
          {shortcuts.map((label, index) => (
            <Shortcut key={index} $shard={index > 0}>
              <span>{label}</span>
            </Shortcut>
          ))}
        </Shortcuts>
        <BackWindow />
        <BrowserWindow />
        <ExplorerWindow />
        <ContextMenu />
        <Pointer width="14" height="20" viewBox="0 0 14 20" aria-hidden="true">
          <path d="M1 1v15l3.500-3.300L7 18.500l2.600-1.100L7.200 12H12z" fill="#fff" stroke="#000" />
        </Pointer>
      </Desktop>
      <Taskbar>
        <TaskbarIcons />
        <Tray>
          <button aria-label="Show hidden icons">
            <Line d="M2.500 11L8 5.500l5.500 5.500" color="#fff" stroke={1.3} />
          </button>
          <button aria-label="Network">
            <Line d="M5.500 3.500h11v8h-11zM11 11.500v4M7 15.500h8M1.500 2.500h4v4h-4zM3.500 6.500v6h2" size={18} box={18} color="#fff" stroke={1.2} />
          </button>
          <button aria-label="Volume">
            <Line d="M1.500 6.500h2.500L8 3v11l-4-3.500H1.500zM10 6.500c1 1.300 1 2.700 0 4M12 4.500c2 2.500 2 5.500 0 8M14 2.500c3 3.500 3 8.500 0 12" size={17} box={17} color="#ddd" stroke={1.1} />
          </button>
          <Clock>
            12:54 AM
            <br />
            1/11/2023
          </Clock>
          <Notices aria-label="Notifications">
            <svg width="18" height="18" viewBox="0 0 18 18">
              <path d="M1 1h16v12H7l-3 3.500V13H1z" fill="#fff" />
              <path d="M4 4.500h10M4 7h10M4 9.500h6" stroke="#02121d" strokeWidth="1.200" />
            </svg>
            <span>1</span>
          </Notices>
        </Tray>
      </Taskbar>
    </Screen>
  );
}
